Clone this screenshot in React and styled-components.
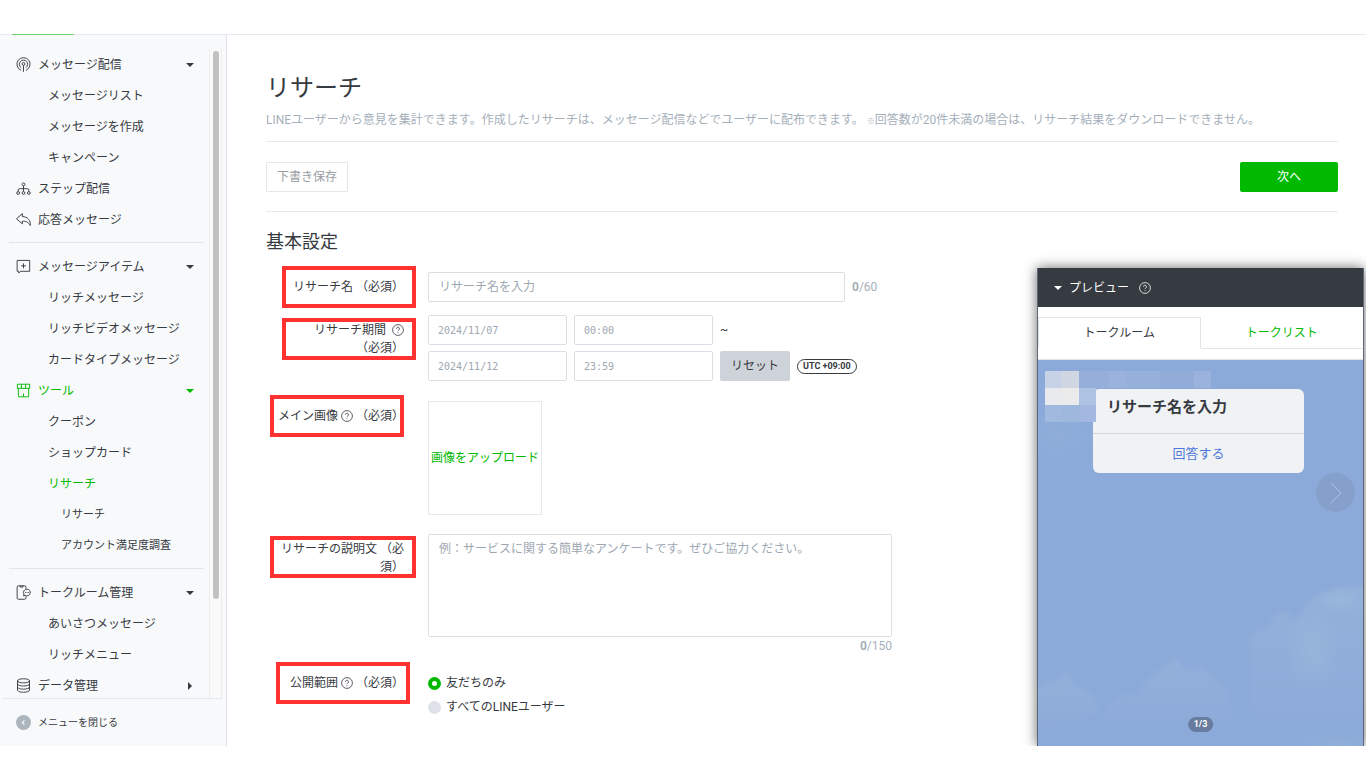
import React, { useState } from "react";
import styled, { createGlobalStyle, css } from "styled-components";

const GlobalStyle = createGlobalStyle`
  :root {
    --green: #00b900;
    --text: #363a41;
    --muted: #a5afba;
    --line: #e6e8eb;
    --input-line: #dbdee4;
    --side-bg: #f8f9fb;
    --mark: #ff3131;
  }

  *,
  *::before,
  *::after {
    box-sizing: border-box;
  }

  body {
    margin: 0;
    background: #fff;
    color: var(--text);
    font-family: Roboto, "Noto Sans CJK JP", sans-serif;
    font-size: 12px;
    line-height: 18px;
  }

  button,
  input,
  textarea {
    font: inherit;
    color: inherit;
  }
`;

// icons for the side menu
const LineIcon = ({ children }) => (
  <StyledIcon viewBox="0 0 16 16" aria-hidden="true">
    {children}
  </StyledIcon>
);

const BroadcastIcon = () => (
  <LineIcon>
    <path d="M5.4 14.2a7 7 0 1 1 5.2 0" />
    <path d="M5.6 11.4a4.4 4.4 0 1 1 4.8 0" />
    <circle cx="8" cy="7.4" r="1.5" />
    <path d="M8 8.9v6.9" />
  </LineIcon>
);

const StepIcon = () => (
  <LineIcon>
    <circle cx="8" cy="3.6" r="1.5" />
    <path d="M8 5.1v6.2M2.3 11.3V9.6q0-1.4 1.4-1.4h8.6q1.4 0 1.4 1.4v1.7" />
    <circle cx="2.3" cy="12.8" r="1.5" />
    <circle cx="8" cy="12.8" r="1.5" />
    <circle cx="13.7" cy="12.8" r="1.5" />
  </LineIcon>
);

const ReplyIcon = () => (
  <LineIcon>
    <path d="M6.8 1.8.5 7.2l6.3 5.4V9.8c3.6-.2 6.4.9 8.4 4.6.8-4.8-2.6-9.4-8.4-9.6z" />
  </LineIcon>
);

const ItemIcon = () => (
  <LineIcon>
    <path d="M1.2 1.5h13.4v11.6H4.8L2.9 15v-1.9H1.2z" />
    <path d="M8 4.7v5.2M5.4 7.3h5.2" />
  </LineIcon>
);

const ToolIcon = () => (
  <LineIcon>
    <path d="M1.4 1.3h13.2v4.4H1.4zM5.8 1.3v4.4M10.2 1.3v4.4" />
    <path d="M2.5 5.7v9h11v-9M8 14.7v-3.4" />
  </LineIcon>
);

const TalkIcon = () => (
  <LineIcon>
    <path d="M10.6 4V2.3q0-1.5-1.5-1.5H2.7q-1.5 0-1.5 1.5v11.4q0 1.5 1.5 1.5h6.4q1.5 0 1.5-1.5v-1.6" />
    <path d="M4.4 1v1.2h3V1" />
    <path d="M11.7 4.4a3.6 3.6 0 1 1-1.9 6.7l-1.8.5.5-1.8a3.6 3.6 0 0 1 3.2-5.4z" />
    <path d="M9.7 8h.9M11.3 8h.9M12.9 8h.9" />
  </LineIcon>
);

const DataIcon = () => (
  <LineIcon>
    <ellipse cx="8" cy="3" rx="6.4" ry="2.2" />
    <path d="M1.6 3v10c0 1.2 2.9 2.2 6.4 2.2s6.4-1 6.4-2.2V3" />
    <path d="M1.6 6.3c0 1.2 2.9 2.2 6.4 2.2s6.4-1 6.4-2.2M1.6 9.7c0 1.2 2.9 2.2 6.4 2.2s6.4-1 6.4-2.2" />
  </LineIcon>
);

const HelpIcon = () => (
  <StyledHelp viewBox="0 0 12 12" role="img" aria-label="ヘルプ">
    <circle cx="6" cy="6" r="5.4" />
    <path d="M4.5 4.8a1.5 1.5 0 1 1 2.3 1.2q-.8.5-.8 1.1M6 8.2v.9" />
  </StyledHelp>
);

const menu = [
  [
    { text: "メッセージ配信", icon: BroadcastIcon, caret: "down" },
    { text: "メッセージリスト", level: 1 },
    { text: "メッセージを作成", level: 1 },
    { text: "キャンペーン", level: 1 },
    { text: "ステップ配信", icon: StepIcon },
    { text: "応答メッセージ", icon: ReplyIcon },
  ],
  [
    { text: "メッセージアイテム", icon: ItemIcon, caret: "down" },
    { text: "リッチメッセージ", level: 1 },
    { text: "リッチビデオメッセージ", level: 1 },
    { text: "カードタイプメッセージ", level: 1 },
    { text: "ツール", icon: ToolIcon, caret: "down", active: true },
    { text: "クーポン", level: 1 },
    { text: "ショップカード", level: 1 },
    { text: "リサーチ", level: 1, active: true },
    { text: "リサーチ", level: 2 },
    { text: "アカウント満足度調査", level: 2 },
  ],
  [
    { text: "トークルーム管理", icon: TalkIcon, caret: "down" },
    { text: "あいさつメッセージ", level: 1 },
    { text: "リッチメニュー", level: 1 },
    { text: "データ管理", icon: DataIcon, caret: "right" },
  ],
];

const Sidebar = () => (
  <StyledSidebar>
    <StyledMenuArea>
      <StyledMenu>
        {menu.map((group, index) => (
          <StyledMenuGroup key={index}>
            {group.map(({ text, icon: Icon, level = 0, caret, active }) => (
              <li key={text + level}>
                <StyledMenuLink href="#" $level={level} $active={active}>
                  {Icon && <Icon />}
                  {text}
                  {caret && <StyledCaret $direction={caret} />}
                </StyledMenuLink>
              </li>
            ))}
          </StyledMenuGroup>
        ))}
      </StyledMenu>
      <StyledScrollTrack>
        <StyledScrollThumb />
      </StyledScrollTrack>
    </StyledMenuArea>
    <StyledCloseMenu type="button">
      <StyledCloseIcon viewBox="0 0 16 16" aria-hidden="true">
        <circle cx="8" cy="8" r="8" />
        <path d="M9 5.8 6.8 8 9 10.2" />
      </StyledCloseIcon>
      メニューを閉じる
    </StyledCloseMenu>
  </StyledSidebar>
);

// pixelated account picture and name: x, y, width, colour
const tiles = [
  [0, 0, 17, "#c7d2e7"],
  [17, 0, 17, "#d0d7e2"],
  [34, 0, 17, "#95afda"],
  [51, 0, 13, "#95afda"],
  [64, 0, 17, "#9ab2dc"],
  [81, 0, 34, "#95b0da"],
  [115, 0, 34, "#92acd9"],
  [149, 0, 17, "#9bb3dc"],
  [0, 17, 17, "#e9eaee"],
  [17, 17, 17, "#ebebeb"],
  [34, 17, 17, "#aec2e4"],
  [0, 34, 17, "#a2b9df"],
  [17, 34, 17, "#9eb7dd"],
  [34, 34, 17, "#a2b8e0"],
];

const Preview = () => {
  const [tab, setTab] = useState("room");

  return (
    <StyledPreview>
      <StyledPreviewHeader>
        <StyledCaret $direction="down" />
        <span>プレビュー</span>
        <HelpIcon />
      </StyledPreviewHeader>
      <StyledTabs>
        <StyledTab
          type="button"
          $selected={tab === "room"}
          onClick={() => setTab("room")}
        >
          トークルーム
        </StyledTab>
        <StyledTab
          type="button"
          $selected={tab === "list"}
          onClick={() => setTab("list")}
        >
          トークリスト
        </StyledTab>
      </StyledTabs>
      <StyledSky>
        <StyledClouds
          viewBox="0 0 326 386"
          preserveAspectRatio="xMidYMax slice"
          aria-hidden="true"
        >
          <defs>
            <linearGradient id="cloud" x1="0" y1="0" x2="0" y2="1">
              <stop offset="0" stopColor="#a3bddc" stopOpacity="0.34" />
              <stop offset="1" stopColor="#a3bddc" stopOpacity="0" />
            </linearGradient>
            <radialGradient id="puff">
              <stop offset="0" stopColor="#a3bfda" stopOpacity="0.4" />
              <stop offset="1" stopColor="#a3bfda" stopOpacity="0" />
            </radialGradient>
            <filter id="soft">
              <feGaussianBlur stdDeviation="2" />
            </filter>
          </defs>
          <g filter="url(#soft)">
            <path
              fill="url(#cloud)"
              d="M-6 332q12-10 26-10l8-8q6 2 7 12 22 6 27 24-30 26-68 22z"
            />
            <path
              fill="url(#cloud)"
              d="M60 366q6-24 30-32l12 0q8-20 26-27l9-9q6 2 8 12l12 0q8-6 18 8 22 8 20 50z"
            />
            <path
              fill="url(#cloud)"
              d="M213 376v-98l6-8 14-4q2-14 14-14 8 2 6 10l10-6q4-14 16-20 16-10 53-10v150z"
            />
          </g>
          <ellipse fill="url(#puff)" cx="275" cy="290" rx="28" ry="42" />
          <ellipse fill="url(#puff)" cx="302" cy="240" rx="26" ry="14" />
          <ellipse fill="url(#puff)" cx="20" cy="75" rx="42" ry="26" opacity="0.4" />
          <ellipse fill="url(#puff)" cx="302" cy="386" rx="60" ry="14" opacity="0.5" />
        </StyledClouds>
        <StyledCard>
          <StyledCardTitle>リサーチ名を入力</StyledCardTitle>
          <StyledCardLink href="#">回答する</StyledCardLink>
        </StyledCard>
        <StyledMosaic viewBox="0 0 166 51" aria-hidden="true">
          {tiles.map(([x, y, width, fill]) => (
            <rect
              key={`${x}-${y}`}
              x={x}
              y={y}
              width={width}
              height="17"
              fill={fill}
            />
          ))}
        </StyledMosaic>
        <StyledNext type="button" aria-label="次のプレビュー">
          <svg width="12" height="22" viewBox="0 0 12 22" aria-hidden="true">
            <path d="M1 1l10 10L1 21" fill="none" stroke="#b0c3e2" />
          </svg>
        </StyledNext>
        <StyledPage>1/3</StyledPage>
      </StyledSky>
    </StyledPreview>
  );
};

export default function App() {
  const [name, setName] = useState("");
  const [description, setDescription] = useState("");
  const [scope, setScope] = useState("friends");

  return (
    <>
      <GlobalStyle />
      <StyledPageFrame>
        <StyledTopBar>
          <StyledTopTab />
        </StyledTopBar>
        <StyledShell>
          <Sidebar />
          <StyledMain>
            <StyledIntro>
              <StyledTitle>リサーチ</StyledTitle>
              <StyledLead>
                LINEユーザーから意見を集計できます。作成したリサーチは、メッセージ配信などでユーザーに配布できます。{" "}
                <StyledNoteSign>※</StyledNoteSign>
                回答数が20件未満の場合は、リサーチ結果をダウンロードできません。
              </StyledLead>
            </StyledIntro>
            <StyledToolbar>
              <StyledDraftButton type="button">下書き保存</StyledDraftButton>
              <StyledNextButton type="button">次へ</StyledNextButton>
            </StyledToolbar>
            <StyledSectionTitle>基本設定</StyledSectionTitle>

            <StyledField>
              <StyledLabelCell>
                <label htmlFor="name">
                  リサーチ名 <StyledRequired>（必須）</StyledRequired>
                </label>
                <StyledMark $top={-6} $right={-12} />
              </StyledLabelCell>
              <StyledLine>
                <StyledNameInput
                  id="name"
                  placeholder="リサーチ名を入力"
                  maxLength={60}
                  value={name}
                  onChange={(event) => setName(event.target.value)}
                />
                <StyledCounter>
                  <b>{name.length}</b>/60
                </StyledCounter>
              </StyledLine>
            </StyledField>

            <StyledField $gap={13}>
              <StyledLabelCell>
                <label htmlFor="startDate">
                  リサーチ期間&nbsp; <HelpIcon />
                  <br />
                  <StyledRequired>（必須）</StyledRequired>
                </label>
                <StyledMark $top={3} $right={-12} />
              </StyledLabelCell>
              <StyledStack>
                <StyledLine>
                  <StyledDateInput id="startDate" defaultValue="2024/11/07" />
                  <StyledDateInput aria-label="開始時刻" defaultValue="00:00" />
                  <span>~</span>
                </StyledLine>
                <StyledLine>
                  <StyledDateInput aria-label="終了日" defaultValue="2024/11/12" />
                  <StyledDateInput aria-label="終了時刻" defaultValue="23:59" />
                  <StyledResetButton type="button">リセット</StyledResetButton>
                  <StyledZone>UTC +09:00</StyledZone>
                </StyledLine>
              </StyledStack>
            </StyledField>

            <StyledField $gap={20}>
              <StyledLabelCell>
                <span id="imageLabel">
                  メイン画像 <HelpIcon />{" "}
                  <StyledRequired>（必須）</StyledRequired>
                </span>
                <StyledMark $top={-6} $right={0} />
              </StyledLabelCell>
              <StyledUpload type="button" aria-describedby="imageLabel">
                画像をアップロード
              </StyledUpload>
            </StyledField>

            <StyledField $gap={19}>
              <StyledLabelCell>
                <label htmlFor="description">リサーチの説明文 （必須）</label>
                <StyledMark $top={2} $right={-12} $wide />
              </StyledLabelCell>
              <StyledDescription>
                <StyledTextarea
                  id="description"
                  placeholder="例：サービスに関する簡単なアンケートです。ぜひご協力ください。"
                  maxLength={150}
                  value={description}
                  onChange={(event) => setDescription(event.target.value)}
                />
                <StyledCounter>
                  <b>{description.length}</b>/150
                </StyledCounter>
              </StyledDescription>
            </StyledField>

            <StyledField $gap={13} role="radiogroup" aria-labelledby="scopeLabel">
              <StyledLabelCell>
                <span id="scopeLabel">
                  公開範囲 <HelpIcon />{" "}
                  <StyledRequired>（必須）</StyledRequired>
                </span>
                <StyledMark $top={-6} $right={-6} />
              </StyledLabelCell>
              <StyledRadios>
                <StyledRadioLabel>
                  <StyledRadio
                    type="radio"
                    name="scope"
                    checked={scope === "friends"}
                    onChange={() => setScope("friends")}
                  />
                  友だちのみ
                </StyledRadioLabel>
                <StyledRadioLabel>
                  <StyledRadio
                    type="radio"
                    name="scope"
                    checked={scope === "all"}
                    onChange={() => setScope("all")}
                  />
                  すべてのLINEユーザー
                </StyledRadioLabel>
              </StyledRadios>
            </StyledField>
          </StyledMain>
          <Preview />
        </StyledShell>
      </StyledPageFrame>
    </>
  );
}

const StyledPageFrame = styled.div`
  display: flex;
  flex-direction: column;
  height: 100vh;
  padding-bottom: 22px;
`;

const StyledTopBar = styled.header`
  display: flex;
  align-items: flex-end;
  flex: none;
  height: 35px;
  padding-left: 12px;
  border-bottom: 1px solid #e6e9ef;
`;

const StyledTopTab = styled.div`
  width: 62px;
  height: 1px;
  margin-bottom: -1px;
  background: #6fd36f;
`;

const StyledShell = styled.div`
  position: relative;
  display: flex;
  flex: 1;
  min-height: 0;
  overflow: hidden;
`;

const StyledSidebar = styled.aside`
  display: flex;
  flex-direction: column;
  flex: none;
  width: 227px;
  padding: 0 4px 0 2px;
  border-right: 1px solid #dfe2e8;
  background: var(--side-bg);
`;

const StyledMenuArea = styled.div`
  display: flex;
  flex: 1;
  min-height: 0;
  padding-top: 14px;
  border-bottom: 1px solid var(--line);
`;

const StyledMenu = styled.nav`
  flex: 1;
  padding: 0 5px 0 7px;
  overflow: hidden;
`;

const StyledMenuGroup = styled.ul`
  margin: 0;
  padding: 0;
  list-style: none;

  & + & {
    margin-top: 7px;
    padding-top: 8px;
    border-top: 1px solid #e1e4e8;
  }
`;

const StyledMenuLink = styled.a`
  display: flex;
  align-items: center;
  gap: 7px;
  height: 31px;
  padding: 0 10px 0 7px;
  color: ${({ $active }) => ($active ? "var(--green)" : "var(--text)")};
  text-decoration: none;
  white-space: nowrap;

  ${({ $level }) =>
    $level === 1 &&
    css`
      padding-left: 39px;
    `}

  ${({ $level }) =>
    $level === 2 &&
    css`
      padding-left: 52px;
      font-size: 11px;
    `}
`;

const StyledIcon = styled.svg`
  flex: none;
  width: 15px;
  height: 15px;
  fill: none;
  stroke: currentColor;
  stroke-linejoin: round;
`;

const StyledCaret = styled.i`
  margin-left: auto;
  border: 4px solid transparent;

  ${({ $direction }) =>
    $direction === "down"
      ? css`
          border-top-color: currentColor;
          border-bottom: 0;
        `
      : css`
          margin-right: 2px;
          border-left-color: currentColor;
          border-right: 0;
        `}
`;

const StyledScrollTrack = styled.div`
  flex: none;
  width: 13px;
  padding: 2px 3px;
  border: solid #ececec;
  border-width: 0 1px;
  background: #fafafa;
`;

const StyledScrollThumb = styled.div`
  width: 6px;
  height: 85%;
  border-radius: 3px;
  background: #c1c1c1;
`;

const StyledCloseMenu = styled.button`
  display: flex;
  align-items: center;
  gap: 7px;
  height: 47px;
  padding: 0 14px;
  border: 0;
  background: none;
  font-size: 10px;
  cursor: pointer;
`;

const StyledCloseIcon = styled.svg`
  width: 15px;
  height: 15px;
  fill: #adb5bd;

  path {
    fill: none;
    stroke: #fff;
    stroke-width: 1.2;
  }
`;

const StyledMain = styled.main`
  flex: 1;
  min-width: 0;
  padding: 35px 28px 0 39px;
`;

const StyledIntro = styled.div`
  padding-bottom: 12px;
  border-bottom: 1px solid var(--line);
`;

const StyledTitle = styled.h1`
  margin: 0 0 5px;
  font-size: 24px;
  font-weight: 400;
  line-height: 36px;
`;

const StyledLead = styled.p`
  margin: 0;
  color: var(--muted);
`;

const StyledNoteSign = styled.span`
  font-size: 8px;
  font-weight: 700;
  line-height: 1;
`;

const StyledToolbar = styled.div`
  display: flex;
  justify-content: space-between;
  padding: 20px 0 19px;
  border-bottom: 1px solid var(--line);
`;

const StyledDraftButton = styled.button`
  height: 30px;
  padding: 0 10px;
  border: 1px solid #e4e6e9;
  border-radius: 1px;
  background: #fff;
  color: #999c9f;
  cursor: pointer;
`;

const StyledNextButton = styled.button`
  width: 98px;
  height: 30px;
  padding: 0;
  border: 0;
  border-radius: 2px;
  background: var(--green);
  color: #fff;
  cursor: pointer;
`;

const StyledSectionTitle = styled.h2`
  margin: 16px 0;
  font-size: 18px;
  font-weight: 400;
  line-height: 28px;
`;

const StyledField = styled.div`
  display: grid;
  grid-template-columns: 138px minmax(0, 1fr);
  column-gap: 24px;
  margin-top: ${({ $gap = 0 }) => $gap}px;
`;

const StyledLabelCell = styled.div`
  position: relative;
  padding-top: 6px;
  text-align: right;
`;

const StyledRequired = styled.span`
  white-space: nowrap;
`;

// red frame around the labels of required fields
const StyledMark = styled.span`
  position: absolute;
  top: ${({ $top }) => $top}px;
  right: ${({ $right }) => $right}px;
  width: ${({ $wide }) => ($wide ? 146 : 134)}px;
  height: 42px;
  border: 4px solid var(--mark);
  pointer-events: none;
`;

const StyledHelp = styled.svg`
  width: 12px;
  height: 12px;
  vertical-align: -2px;
  fill: none;
  stroke: currentColor;
  stroke-width: 0.8;
`;

const StyledLine = styled.div`
  display: flex;
  align-items: center;
  gap: 7px;
`;

const StyledStack = styled.div`
  display: grid;
  gap: 6px;
`;

const inputStyles = css`
  border: 1px solid var(--input-line);
  border-radius: 2px;
  background: #fff;

  &::placeholder {
    color: #9da7b2;
    opacity: 1;
  }
`;

const StyledNameInput = styled.input`
  ${inputStyles}
  width: 417px;
  height: 30px;
  padding: 0 10px;
`;

const StyledDateInput = styled.input`
  ${inputStyles}
  width: 139px;
  height: 30px;
  padding: 0 9px;
  color: #9da7b2;
  font-family: "DejaVu Sans Mono", monospace;
  font-size: 10px;
`;

const StyledResetButton = styled.button`
  width: 70px;
  height: 30px;
  padding: 0;
  border: 0;
  border-radius: 2px;
  background: #ced3da;
  cursor: pointer;
`;

const StyledZone = styled.span`
  padding: 0 5px;
  border: 1px solid var(--text);
  border-radius: 8px;
  font-size: 9px;
  font-weight: 700;
  line-height: 13px;
`;

const StyledCounter = styled.span`
  color: var(--muted);
  line-height: 18px;
`;

const StyledUpload = styled.button`
  width: 114px;
  height: 114px;
  padding: 0;
  border: 1px solid #e6e8ec;
  background: #fff;
  color: var(--green);
  white-space: nowrap;
  cursor: pointer;
`;

const StyledDescription = styled.div`
  display: flex;
  flex-direction: column;
  width: 464px;
  text-align: right;
`;

const StyledTextarea = styled.textarea`
  ${inputStyles}
  height: 103px;
  padding: 5px 10px;
  resize: none;
`;

const StyledRadios = styled.div`
  display: grid;
  gap: 6px;
  padding-top: 6px;
`;

const StyledRadioLabel = styled.label`
  display: flex;
  align-items: center;
  gap: 5px;
`;

const StyledRadio = styled.input`
  appearance: none;
  width: 13px;
  height: 13px;
  margin: 0;
  border-radius: 50%;
  background: #dee2e8;

  &:checked {
    border: 4px solid var(--green);
    background: #fff;
  }
`;

const StyledPreview = styled.section`
  position: absolute;
  top: 233px;
  right: 2px;
  bottom: 0;
  display: flex;
  flex-direction: column;
  width: 327px;
  border: solid #5f6878;
  border-width: 0 1px;
  background: #fff;
  box-shadow: 0 0 12px rgba(0, 0, 0, 0.6);
`;

const StyledPreviewHeader = styled.header`
  display: flex;
  align-items: center;
  height: 39px;
  padding: 0 16px;
  background: #363a41;
  color: #fff;

  i {
    margin: 0 7px 0 0;
  }

  svg {
    margin-left: 10px;
  }
`;

const StyledTabs = styled.div`
  display: grid;
  grid-template-columns: 1fr 1fr;
  padding: 10px 0;
  border-bottom: 1px solid #e1e4e8;
`;

const StyledTab = styled.button`
  height: 32px;
  padding: 0;
  border: 1px solid transparent;
  border-bottom-color: #e1e4e8;
  background: #fff;
  color: var(--green);
  cursor: pointer;

  ${({ $selected }) =>
    $selected &&
    css`
      border-color: #e1e4e8;
      border-bottom-color: transparent;
      color: var(--text);
    `}
`;

const StyledSky = styled.div`
  position: relative;
  flex: 1;
  min-height: 0;
  padding: 29px 59px 0 55px;
  background: #8caad9;
`;

const StyledClouds = styled.svg`
  position: absolute;
  inset: 0;
  width: 100%;
  height: 100%;
`;

const StyledMosaic = styled.svg`
  position: absolute;
  top: 11px;
  left: 7px;
  width: 166px;
  height: 51px;
`;

const StyledCard = styled.div`
  position: relative;
  border-radius: 6px;
  background: #f1f2f4;
`;

const StyledCardTitle = styled.div`
  height: 45px;
  padding: 8px 14px;
  border-bottom: 1px solid #d2d5da;
  font-size: 15px;
  font-weight: 700;
  line-height: 20px;
`;

const StyledCardLink = styled.a`
  display: block;
  color: #4f78d8;
  font-size: 13px;
  line-height: 39px;
  text-align: center;
  text-decoration: none;
`;

const StyledNext = styled.button`
  position: absolute;
  top: 113px;
  right: 8px;
  display: grid;
  place-items: center;
  width: 39px;
  height: 39px;
  padding: 0;
  border: 0;
  border-radius: 50%;
  background: #84a0cb;
  cursor: pointer;
`;

const StyledPage = styled.span`
  position: absolute;
  bottom: 14px;
  left: 50%;
  padding: 0 6px;
  border-radius: 8px;
  background: #677c9e;
  color: #fff;
  font-size: 9px;
  font-weight: 700;
  line-height: 15px;
  transform: translateX(-50%);
`;
